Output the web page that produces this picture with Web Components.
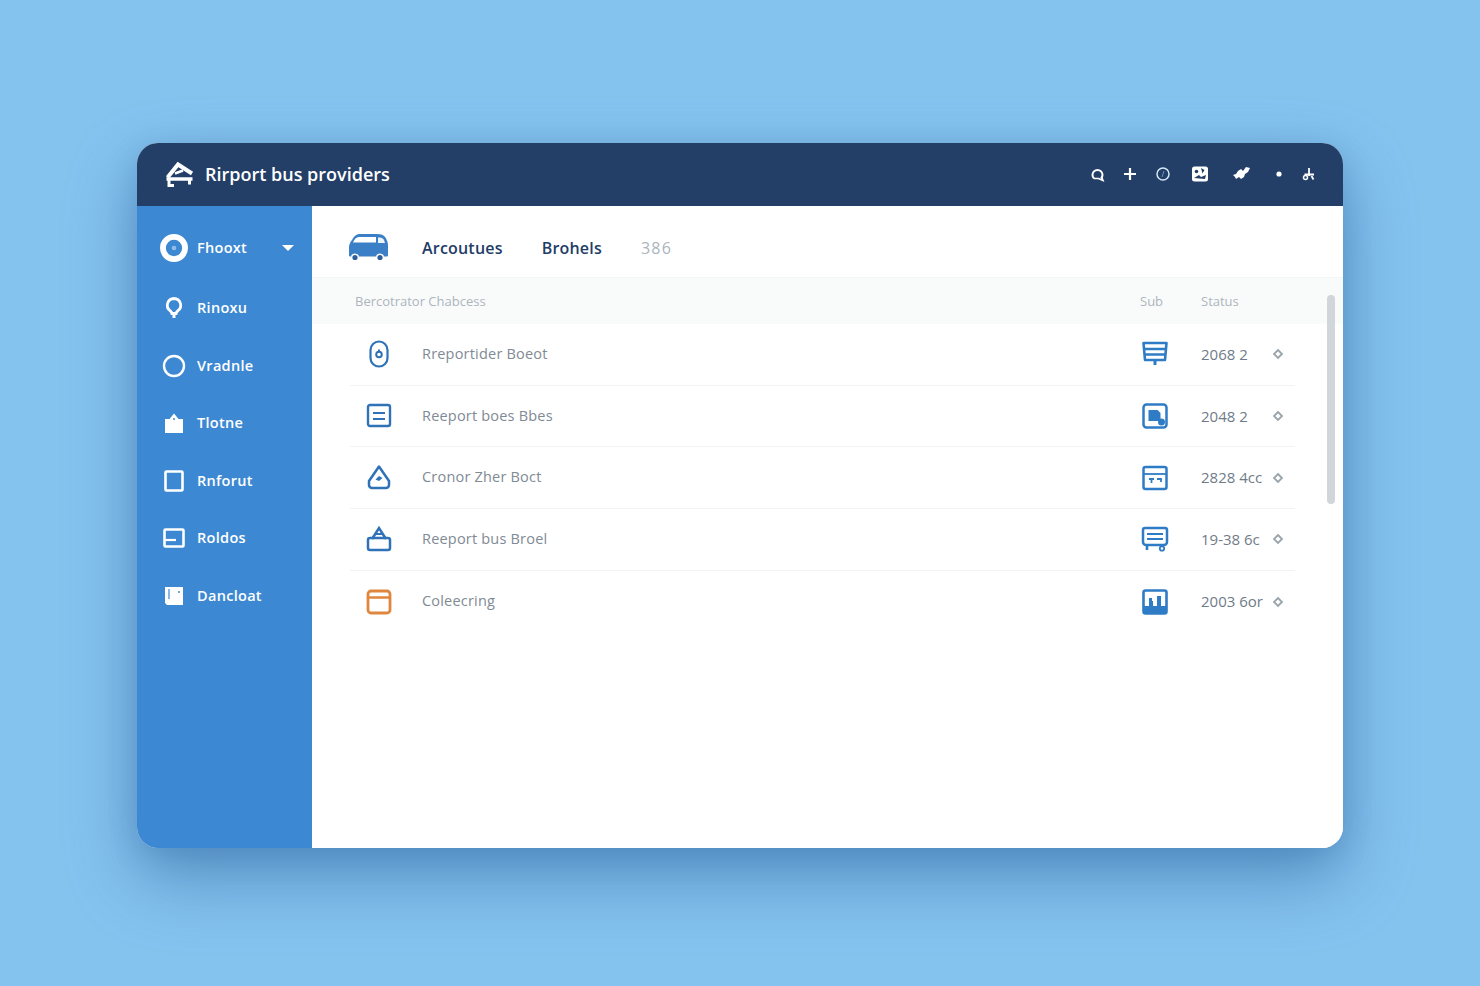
<!DOCTYPE html>
<html lang="en"><head><meta charset="utf-8"><title>Airport bus providers</title>
<style>
html,body{margin:0;height:100%}
body{background:#85c3ef;font-family:"Open Sans","Liberation Sans",sans-serif;box-sizing:border-box;padding:143px 137px 138px;overflow:hidden}
</style></head><body>
<app-window>
  <app-header slot="header" title-text="Rirport bus providers"></app-header>
  <side-nav slot="side">
    <nav-item icon="ring" active caret>Fhooxt</nav-item>
    <nav-item icon="pin">Rinoxu</nav-item>
    <nav-item icon="circle">Vradnle</nav-item>
    <nav-item icon="tag">Tlotne</nav-item>
    <nav-item icon="frame">Rnforut</nav-item>
    <nav-item icon="panel">Roldos</nav-item>
    <nav-item icon="doc">Dancloat</nav-item>
  </side-nav>
  <main-panel slot="main">
    <data-row icon="oval" side="sign" value="2068 2">Rreportider Boeot</data-row>
    <data-row icon="list" side="note" value="2048 2">Reeport boes Bbes</data-row>
    <data-row icon="drop" side="card" value="2828 4cc">Cronor Zher Boct</data-row>
    <data-row icon="bag" side="cart" value="19-38 6c">Reeport bus Broel</data-row>
    <data-row icon="box" side="chart" value="2003 6or" last>Coleecring</data-row>
  </main-panel>
</app-window>
<script>
const ICONS={
 ring:'<circle cx="12" cy="12" r="9.500" fill="none" stroke="currentColor" stroke-width="5"/><circle cx="12" cy="12" r="2" fill="currentColor" opacity=".45"/>',
 pin:'<path d="M12 2.500a6.800 6.800 0 0 0-4 12.200c.9.700 1.600 1.600 1.900 2.800h4.200c.3-1.200 1-2.100 1.900-2.800a6.800 6.800 0 0 0-4-12.200z" fill="none" stroke="currentColor" stroke-width="2.800"/><path d="M12 16v6" stroke="currentColor" stroke-width="3"/>',
 circle:'<circle cx="12" cy="12" r="10" fill="none" stroke="currentColor" stroke-width="2.400"/>',
 tag:'<path d="M3 8h4.500L12 2.500 16.500 8H21v14H3z" fill="currentColor"/><circle cx="12" cy="8" r="1" fill="#3d88d2"/>',
 frame:'<rect x="3.500" y="2.500" width="17" height="19" rx="1" fill="none" stroke="currentColor" stroke-width="2.600"/>',
 panel:'<rect x="2.500" y="3.500" width="19" height="17" rx="1" fill="none" stroke="currentColor" stroke-width="2.600"/><path d="M3 14h11" stroke="currentColor" stroke-width="2.200"/>',
 doc:'<path d="M3 3h18v18H5l-2-2z" fill="currentColor"/><path d="M7 5v10" stroke="#3d88d2" stroke-width="1.200"/><circle cx="17" cy="8" r="1" fill="#3d88d2"/>',
 oval:'<rect x="5.500" y="1.500" width="17" height="25" rx="8.500" fill="none" stroke="currentColor" stroke-width="2.200"/><circle cx="14" cy="14.500" r="2.800" fill="none" stroke="currentColor" stroke-width="2"/><path d="M14 9.500v3" stroke="currentColor" stroke-width="2"/>',
 list:'<rect x="3" y="3" width="22" height="21" rx="2" fill="none" stroke="currentColor" stroke-width="2.400"/><path d="M8 11h12M8 17h12" stroke="currentColor" stroke-width="2.200"/>',
 drop:'<path d="M14 2.500 24 17v4a3 3 0 0 1-3 3H7a3 3 0 0 1-3-3v-4z" fill="none" stroke="currentColor" stroke-width="2.500" stroke-linejoin="round"/><path d="M10.500 15.500l3.500-3.500 3.500 2-3.500 3z" fill="currentColor"/>',
 bag:'<path d="M7 14 14 3l7 11" fill="none" stroke="currentColor" stroke-width="2.500"/><rect x="3" y="13" width="22" height="12" rx="2" fill="none" stroke="currentColor" stroke-width="2.500"/><path d="M10 9h8" stroke="currentColor" stroke-width="2"/>',
 box:'<rect x="3" y="3" width="22" height="22" rx="3" fill="#fff" stroke="currentColor" stroke-width="2.800"/><path d="M3 9.500h22" stroke="currentColor" stroke-width="2.500"/>',
 sign:'<path d="M2.500 3h23l-1.500 17H4z" fill="none" stroke="currentColor" stroke-width="2.600" stroke-linejoin="round"/><path d="M3 9h22M4 14.500h20" stroke="currentColor" stroke-width="2.600"/><path d="M14 20v5" stroke="currentColor" stroke-width="3"/>',
 note:'<rect x="2.500" y="2.500" width="23" height="23" rx="3" fill="none" stroke="currentColor" stroke-width="2.500"/><path d="M7.500 8h9l3 3v8h-12z" fill="currentColor"/><circle cx="20.500" cy="20" r="3.500" fill="currentColor"/>',
 card:'<rect x="2.500" y="3" width="23" height="22" rx="2" fill="none" stroke="currentColor" stroke-width="2.500"/><path d="M3 10h22" stroke="currentColor" stroke-width="1.800"/><path d="M8 15h5M10.500 15v4M16 15h4v3" fill="none" stroke="currentColor" stroke-width="1.800"/>',
 cart:'<path d="M4 3h20a2 2 0 0 1 2 2v12a3 3 0 0 1-3 3H5a3 3 0 0 1-3-3V5a2 2 0 0 1 2-2z" fill="none" stroke="currentColor" stroke-width="2.500"/><path d="M6 9h16M6 14h16" stroke="currentColor" stroke-width="2.200"/><path d="M6 20v5M21 20v2" stroke="currentColor" stroke-width="2.600"/><circle cx="21" cy="23.500" r="2.200" fill="none" stroke="currentColor" stroke-width="1.800"/>',
 chart:'<rect x="2.500" y="2.500" width="23" height="23" rx="2" fill="none" stroke="currentColor" stroke-width="2.600"/><path d="M3 25V18h5v-5h4v5h4V8h4v10h5v7z" fill="currentColor"/><rect x="8" y="10" width="3" height="3" fill="currentColor"/>',
 bus:'<path d="M2 22v-8c0-2 1-4.500 3-7 2-3.500 4-6 8-6h17c4 0 7 1 8.500 3.500C40 7 41 9.500 41 12v10c0 1-.6 1.500-1.500 1.500h-36C2.600 23.500 2 23 2 22z" fill="#3b80c6"/><path d="M6 9.500c1-3 3-5.500 6-5.500h17v5.500z" fill="#fff"/><path d="M31 4.500c3 0 5 .5 6 2.500l1 3h-7z" fill="#fff" opacity=".9"/><circle cx="8" cy="24.500" r="3.300" fill="#2d5f9c" stroke="#fff" stroke-width="1.400"/><circle cx="33" cy="24.500" r="3.300" fill="#2d5f9c" stroke="#fff" stroke-width="1.400"/>'
};
const def=(n,c)=>customElements.define(n,c);
function shadow(el,html){el.attachShadow({mode:'open'}).innerHTML=html}
def('app-icon',class extends HTMLElement{connectedCallback(){
 const n=this.getAttribute('name'),v=this.getAttribute('box')||'0 0 24 24';
 shadow(this,`<style>:host{display:inline-flex;flex:none;color:inherit}svg{display:block;width:100%;height:100%}</style><svg viewBox="${v}" aria-hidden="true">${ICONS[n]||''}</svg>`);
}});
def('app-window',class extends HTMLElement{connectedCallback(){
 shadow(this,`<style>:host{display:grid;grid-template-columns:175px 1fr;grid-template-rows:63px 1fr;height:705px;border-radius:21px;overflow:hidden;background:#fff;box-shadow:0 30px 70px rgba(32,84,146,.46),0 8px 30px rgba(32,84,146,.2)}
 ::slotted([slot=header]){grid-column:1/3}</style><slot name="header"></slot><slot name="side"></slot><slot name="main"></slot>`);
}});
def('app-header',class extends HTMLElement{connectedCallback(){
 const t=this.getAttribute('title-text');
 shadow(this,`<style>:host{display:flex;align-items:center;background:#233f68;color:#fff;padding:0 27px}
 .logo{width:30px;height:28px;margin-right:11px;margin-top:-2px}
 h1{margin:0;font:600 18px/1 "Open Sans",sans-serif;flex:1;margin-top:-1px}
 .tools{display:flex;align-items:center;margin-top:-2px}
 svg{display:block}
 </style>
 <svg class="logo" viewBox="0 0 30 28" fill="none" stroke="#fff"><path d="M3.500 17.500 14 4.500 28 13.500" stroke-width="4"/><path d="M11 13.500l8-3" stroke-width="2.500"/><path d="M2.500 19h26" stroke-width="3.500"/><path d="M5 20v5.500h5M25.500 20v4.500" stroke-width="3"/></svg>
 <h1>${t}</h1>
 <div class="tools">
 <svg width="16" height="16" viewBox="0 0 16 16" style="margin-right:17px"><path d="M5 12.500a5 5 0 1 1 7 .0" fill="none" stroke="#fff" stroke-width="2"/><path d="M5 12.500h4.500l4.500 2-1.500-4" fill="none" stroke="#fff" stroke-width="1.600"/></svg>
 <svg width="16" height="16" viewBox="0 0 16 16" style="margin-right:17px"><path d="M8 2v12M2 8h12" stroke="#fff" stroke-width="2.200"/></svg>
 <svg width="16" height="16" viewBox="0 0 16 16" style="margin-right:20px"><circle cx="8" cy="8" r="6" fill="none" stroke="#d5e6f5" stroke-width="1.500"/><path d="M7 11l2-6" stroke="#7fa3c9" stroke-width=".8"/></svg>
 <svg width="18" height="18" viewBox="0 0 18 18" style="margin-right:23px"><rect x="1" y="1.500" width="16" height="15" rx="2.500" fill="#fff"/><circle cx="5.500" cy="6.500" r="1.800" fill="#233f68"/><path d="M10 3l3.500 2-2 3.500zM3 13l5-3 2 2 5-2-1 4z" fill="#233f68"/></svg>
 <svg width="20" height="16" viewBox="0 0 20 16" style="margin-right:24px"><path d="M1 9l3-1 2-3 3-2 2 2 3-4 4 1-2 4-3 2-1 3-3 2-2-2-3 2-1-2z" fill="#fff"/></svg>
 <svg width="6" height="6" viewBox="0 0 6 6" style="margin-right:20px"><circle cx="3" cy="3" r="2.600" fill="#fff"/></svg>
 <svg width="14" height="14" viewBox="0 0 14 14"><path d="M7 1v8M2.500 7.500h9.500" stroke="#fff" stroke-width="1.800"/><circle cx="3.500" cy="10.500" r="2" fill="none" stroke="#fff" stroke-width="1.500"/><path d="M9.500 9l2 3.500" stroke="#fff" stroke-width="1.800"/></svg>
 </div>`);
}});
def('side-nav',class extends HTMLElement{connectedCallback(){
 shadow(this,`<style>:host{display:flex;flex-direction:column;background:#3d88d2;padding:12px 0 0 23px;color:#fff}</style><slot></slot>`);
}});
def('nav-item',class extends HTMLElement{connectedCallback(){
 const i=this.getAttribute('icon'),c=this.hasAttribute('caret'),a=this.hasAttribute('active');
 const s=a?28:24;
 shadow(this,`<style>:host{display:flex;align-items:center;height:${a?60:57.5}px;margin-bottom:${a?1.5:0}px;padding-right:17px}
 .ic{width:28px;display:flex;justify-content:center;margin-right:9px}
 app-icon{width:${s}px;height:${s}px}
 .t{font:600 14.500px/1 "Open Sans",sans-serif;flex:1;letter-spacing:.3px}
 svg{display:block}</style>
 <span class="ic"><app-icon name="${i}"></app-icon></span><span class="t"><slot></slot></span>
 ${c?'<svg width="14" height="8" viewBox="0 0 14 8"><path d="M1 1h12L7 7z" fill="#fff"/></svg>':''}`);
}});
def('main-panel',class extends HTMLElement{connectedCallback(){
 shadow(this,`<style>:host{display:block;position:relative;background:#fff;min-width:0}
 .tabs{display:flex;align-items:center;height:72px;padding:12px 0 0 35px;font:600 16px/1 "Open Sans",sans-serif;letter-spacing:.2px;color:#1f3d66;box-sizing:border-box;border-bottom:1px solid #f3f6f8}
 .bus{width:42px;height:29px;margin-right:33px}
 .tabs span{margin-right:39px}
 .tabs .m{color:#aab4bd;font-weight:400;margin-right:0;letter-spacing:1.200px}
 .head{display:grid;grid-template-columns:1fr 61px 67px 27px;align-items:center;height:46px;background:#f9fbfb;padding:0 48px 0 43px;font:400 13px/1 "Open Sans",sans-serif;color:#adb5bc}
 .rows{padding:0 48px 0 38px}
 .bar{position:absolute;right:8px;top:89px;width:8px;height:209px;border-radius:4px;background:#d0d6da}
 </style>
 <div class="tabs"><app-icon class="bus" name="bus" box="0 0 42 29"></app-icon><span>Arcoutues</span><span>Brohels</span><span class="m">386</span></div>
 <div class="head"><span>Bercotrator Chabcess</span><span>Sub</span><span>Status</span><span></span></div>
 <div class="rows"><slot></slot></div><div class="bar"></div>`);
}});
def('data-row',class extends HTMLElement{connectedCallback(){
 const i=this.getAttribute('icon'),s=this.getAttribute('side'),v=this.getAttribute('value'),l=this.hasAttribute('last');
 const col=i==='box'?'#e0873f':'#2f72b8';
 shadow(this,`<style>:host{display:grid;grid-template-columns:72px 1fr 61px 67px 27px;align-items:center;height:61.700px;box-sizing:border-box;${l?'':'border-bottom:1px solid #f1f4f6;'}font:400 14.500px/1 "Open Sans",sans-serif;letter-spacing:.2px;color:#7f8a95}
 .a{width:28px;height:28px;margin-left:15px;color:${col}}
 .b{width:28px;height:28px;margin-left:1px;color:#2f7cc6}
 .v{color:#6f7b88;white-space:nowrap;font-size:15px;letter-spacing:0}
 svg{display:block;justify-self:start;margin-left:4px}</style>
 <app-icon class="a" name="${i}" box="0 0 28 28"></app-icon><span><slot></slot></span>
 <app-icon class="b" name="${s}" box="0 0 28 28"></app-icon><span class="v">${v}</span>
 <svg width="12" height="12" viewBox="0 0 12 12"><path d="M6 2 10 6 6 10 2 6z" fill="none" stroke="#9aa4ad" stroke-width="1.800"/></svg>`);
}});
</script>
</body></html>
